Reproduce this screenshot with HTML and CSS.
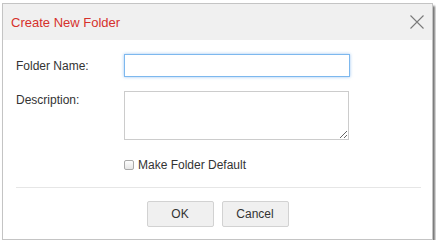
FILE: index.html
```html
<!DOCTYPE html>
<html lang="en">
<head>
<meta charset="UTF-8">
<title>Create New Folder</title>
<link rel="stylesheet" href="styles.css">
</head>
<body>

<div class="dialog">
  <div class="dialog-head">
    <h2>Create New Folder</h2>
    <span class="close">
      <svg width="14" height="14" viewBox="0 0 14 14"><path d="M0.5 0.5L13.5 13.5M13.5 0.5L0.5 13.5" stroke="#7a7a7a" stroke-width="1.1" fill="none"/></svg>
    </span>
  </div>

  <div class="dialog-body">
    <label class="lbl mid" for="folderName">Folder Name:</label>
    <input id="folderName" class="txt focus" type="text">

    <label class="lbl top" for="desc">Description:</label>
    <textarea id="desc" class="area"></textarea>

    <div></div>
    <label class="check"><input type="checkbox"><span>Make Folder Default</span></label>
  </div>

  <div class="sep"></div>

  <div class="dialog-foot">
    <button>OK</button>
    <button>Cancel</button>
  </div>
</div>

</body>
</html>
```

FILE: styles.css
```css
body {
    margin:0;
    background:#fff;
    font-family:"Liberation Sans", Arial, sans-serif;
    color:#333;
}

.dialog {
    margin:3px 0 0 2px;
    width:431px;
    box-sizing:border-box;
    border:1px solid #c4c4c4;
    background:#fff;
    box-shadow:2px 3px 2px rgba(0,0,0,0.55);
}

.dialog-head {
    height:36px;
    background:#f0f0f0;
    display:flex;
    align-items:center;
    justify-content:space-between;
    padding:0 8px;
}
.dialog-head h2 {
    margin:0;
    font-size:13px;
    font-weight:normal;
    color:#d6312c;
}
.close { display:flex; cursor:pointer; }

.dialog-body {
    display:grid;
    grid-template-columns:108px 226px;
    row-gap:14px;
    padding:14px 13px 0 13px;
}
.lbl { font-size:12px; line-height:14px; }
.lbl.mid { align-self:center; }
.lbl.top { padding-top:2px; }

.txt {
    height:23px;
    box-sizing:border-box;
    border:1px solid #ccc;
    margin:0;
    padding:2px 4px;
    outline:none;
}
.txt.focus {
    border-color:#7db8ee;
    box-shadow:0 0 3px rgba(90,160,235,0.6);
}
.area {
    width:225px;
    height:49px;
    box-sizing:border-box;
    border:1px solid #ccc;
    margin:0;
    padding:2px 4px;
    outline:none;
}

.check {
    display:flex;
    align-items:center;
    gap:4px;
    margin-top:4px;
    height:14px;
    font-size:12px;
}
.check input {
    appearance:none;
    -webkit-appearance:none;
    width:10px;
    height:10px;
    margin:0;
    border:1px solid #a9a9a9;
    border-radius:2px;
    background:linear-gradient(#fdfdfd, #e6e6e6);
}

.sep {
    border-top:1px solid #e6e6e6;
    margin:15px 11px 0 13px;
}

.dialog-foot {
    display:flex;
    justify-content:center;
    gap:8px;
    padding:13px 0 12px;
}
.dialog-foot button {
    width:67px;
    height:26px;
    font-family:"Liberation Sans", Arial, sans-serif;
    font-size:12px;
    color:#333;
    background:#f0f0f0;
    border:1px solid #d2d2d2;
    border-radius:2px;
    cursor:pointer;
}
```
